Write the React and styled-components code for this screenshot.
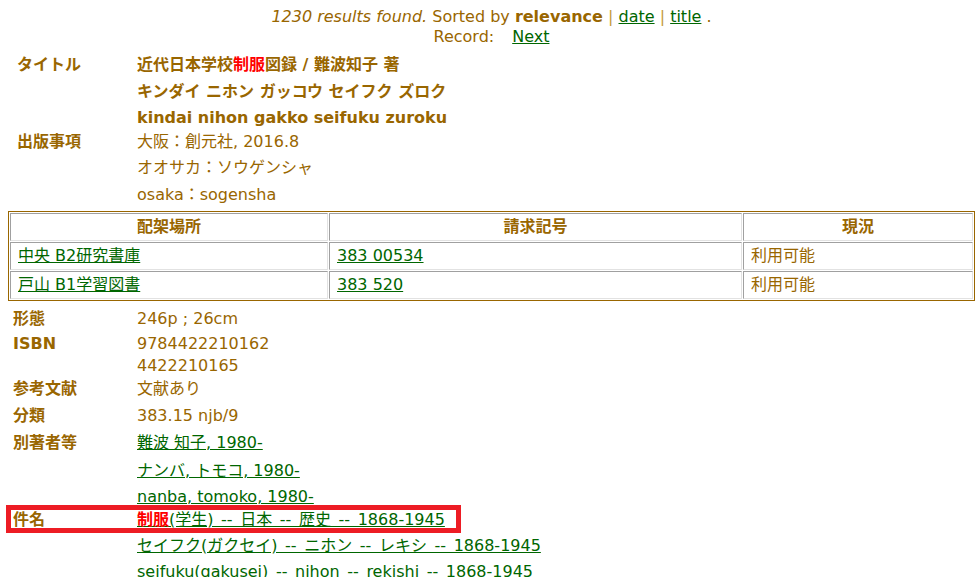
import React from "react";
import styled, { createGlobalStyle } from "styled-components";

const GlobalStyle = createGlobalStyle`
  html, body {
    margin: 0;
    padding: 0;
    background: #ffffff;
  }
  body {
    font-family: "DejaVu Sans", "Noto Sans CJK JP", sans-serif;
    font-size: 16px;
    color: #996600;
  }
`;

const Page = styled.div`
  box-sizing: border-box;
  height: 577px;
  overflow: hidden;
  padding: 7px 4px 0 8px;
`;

const ResultBar = styled.div`
  text-align: center;
  line-height: 20px;
  white-space: nowrap;
`;

const Count = styled.em`
  font-style: italic;
`;

const Sep = styled.span`
  color: #c49a3c;
`;

const Link = styled.a`
  color: #006600;
  text-decoration: underline;
  cursor: pointer;
`;

const RecordLink = styled(Link)`
  margin-left: 18px;
`;

const Hit = styled.span`
  color: #ff0000;
  font-weight: ${(p) => (p.$bold ? "bold" : "inherit")};
  text-decoration-color: #ff0000;
`;

const FieldList = styled.div`
  margin-top: ${(p) => p.$top}px;
`;

const Field = styled.div`
  position: relative;
  display: grid;
  grid-template-columns: ${(p) => p.$labelWidth}px 1fr;
  padding-left: ${(p) => p.$indent}px;
  margin-top: ${(p) => p.$gap || 0}px;
`;

const Label = styled.div`
  font-weight: bold;
  line-height: ${(p) => p.$h}px;
  white-space: nowrap;
`;

const Values = styled.div`
  display: flex;
  flex-direction: column;
`;

const Line = styled.div`
  height: ${(p) => p.$h}px;
  line-height: ${(p) => p.$h}px;
  font-weight: ${(p) => (p.$bold ? "bold" : "normal")};
  word-spacing: ${(p) => (p.$wide ? "2.5px" : "normal")};
  white-space: nowrap;
`;

const Highlight = styled.div`
  position: absolute;
  left: -2px;
  top: -3px;
  width: 455px;
  height: 28px;
  box-sizing: border-box;
  border: 5px solid #ed1c24;
  pointer-events: none;
`;

const Holdings = styled.table`
  width: 100%;
  margin-top: 3px;
  border: 1px solid #996600;
  border-spacing: 1px;
  table-layout: fixed;
`;

const HeadCell = styled.th`
  height: 28px;
  box-sizing: border-box;
  padding: 0 7px;
  line-height: 26px;
  font-weight: bold;
  text-align: center;
  border: 1px solid #a0a0a0;
  border-color: #a0a0a0 #e2e2e2 #e2e2e2 #a0a0a0;
`;

const Cell = styled.td`
  height: 28px;
  box-sizing: border-box;
  padding: 0 7px;
  line-height: 26px;
  text-align: left;
  border: 1px solid #a0a0a0;
  border-color: #a0a0a0 #e2e2e2 #e2e2e2 #a0a0a0;
  white-space: nowrap;
`;

const holdings = [
  { place: "中央 B2研究書庫", call: "383 00534", status: "利用可能" },
  { place: "戸山 B1学習図書", call: "383 520", status: "利用可能" },
];

export default function App() {
  return (
    <>
      <GlobalStyle />
      <Page>
        <ResultBar>
          <Count>1230 results found.</Count> Sorted by <b>relevance</b>{" "}
          <Sep>|</Sep> <Link>date</Link> <Sep>|</Sep> <Link>title</Link> .
          <br />
          Record:<RecordLink>Next</RecordLink>
        </ResultBar>

        <FieldList $top={5}>
          <Field $labelWidth={120} $indent={9}>
            <Label $h={26.5}>タイトル</Label>
            <Values>
              <Line $h={26.5} $bold>
                近代日本学校<Hit>制服</Hit>図録 / 難波知子 著
              </Line>
              <Line $h={26.5} $bold>
                キンダイ ニホン ガッコウ セイフク ズロク
              </Line>
              <Line $h={26.5} $bold>
                kindai nihon gakko seifuku zuroku
              </Line>
            </Values>
          </Field>
          <Field $labelWidth={120} $indent={9} $gap={-3}>
            <Label $h={26.5}>出版事項</Label>
            <Values>
              <Line $h={26.5}>大阪：創元社, 2016.8</Line>
              <Line $h={26.5}>オオサカ：ソウゲンシャ</Line>
              <Line $h={26.5}>osaka：sogensha</Line>
            </Values>
          </Field>
        </FieldList>

        <Holdings>
          <colgroup>
            <col style={{ width: "318px" }} />
            <col style={{ width: "413px" }} />
            <col />
          </colgroup>
          <thead>
            <tr>
              <HeadCell>配架場所</HeadCell>
              <HeadCell>請求記号</HeadCell>
              <HeadCell>現況</HeadCell>
            </tr>
          </thead>
          <tbody>
            {holdings.map((h) => (
              <tr key={h.call}>
                <Cell>
                  <Link>{h.place}</Link>
                </Cell>
                <Cell>
                  <Link>{h.call}</Link>
                </Cell>
                <Cell>{h.status}</Cell>
              </tr>
            ))}
          </tbody>
        </Holdings>

        <FieldList $top={5}>
          <Field $labelWidth={124} $indent={5}>
            <Label $h={25.5}>形態</Label>
            <Values>
              <Line $h={25.5}>246p ; 26cm</Line>
            </Values>
          </Field>
          <Field $labelWidth={124} $indent={5}>
            <Label $h={23.5}>ISBN</Label>
            <Values>
              <Line $h={23.5}>9784422210162</Line>
              <Line $h={22}>4422210165</Line>
            </Values>
          </Field>
          <Field $labelWidth={124} $indent={5}>
            <Label $h={24.5}>参考文献</Label>
            <Values>
              <Line $h={24.5}>文献あり</Line>
            </Values>
          </Field>
          <Field $labelWidth={124} $indent={5}>
            <Label $h={27}>分類</Label>
            <Values>
              <Line $h={27}>383.15 njb/9</Line>
            </Values>
          </Field>
          <Field $labelWidth={124} $indent={5}>
            <Label $h={28}>別著者等</Label>
            <Values>
              <Line $h={28}>
                <Link>難波 知子, 1980-</Link>
              </Line>
              <Line $h={28.5}>
                <Link>ナンバ, トモコ, 1980-</Link>
              </Line>
              <Line $h={23}>
                <Link>nanba, tomoko, 1980-</Link>
              </Line>
            </Values>
          </Field>
          <Field $labelWidth={124} $indent={5}>
            <Highlight />
            <Label $h={24.5}>件名</Label>
            <Values>
              <Line $h={24.5} $wide>
                <Link>
                  <Hit $bold>制服</Hit>(学生) -- 日本 -- 歴史 -- 1868-1945
                </Link>
              </Line>
              <Line $h={26} $wide>
                <Link>セイフク(ガクセイ) -- ニホン -- レキシ -- 1868-1945</Link>
              </Line>
              <Line $h={25} $wide>
                <Link>seifuku(gakusei) -- nihon -- rekishi -- 1868-1945</Link>
              </Line>
            </Values>
          </Field>
        </FieldList>
      </Page>
    </>
  );
}
